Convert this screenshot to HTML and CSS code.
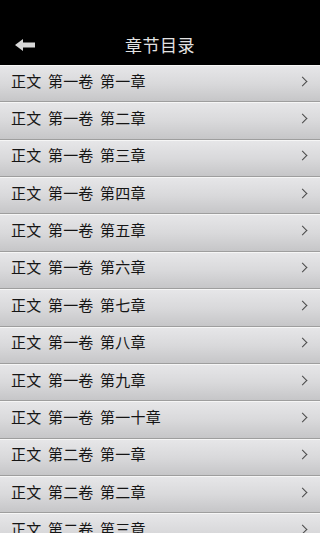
FILE: index.html
```html
<!DOCTYPE html>
<html>
<head>
<meta charset="utf-8">
<link rel="stylesheet" href="styles.css">
</head>
<body>
<div class="app">
  <div class="statusbar"></div>
  <div class="header">
    <div class="back">
      <svg width="22" height="14" viewBox="0 0 22 14"><path d="M1 7 L9 1 L9 4.5 L21 4.5 L21 9.5 L9 9.5 L9 13 Z" fill="#d8d8d8"/></svg>
    </div>
    <div class="title">章节目录</div>
  </div>
  <ul class="list">
    <li class="row"><span>正文 第一卷 第一章</span><i class="chev"></i></li>
    <li class="row"><span>正文 第一卷 第二章</span><i class="chev"></i></li>
    <li class="row"><span>正文 第一卷 第三章</span><i class="chev"></i></li>
    <li class="row"><span>正文 第一卷 第四章</span><i class="chev"></i></li>
    <li class="row"><span>正文 第一卷 第五章</span><i class="chev"></i></li>
    <li class="row"><span>正文 第一卷 第六章</span><i class="chev"></i></li>
    <li class="row"><span>正文 第一卷 第七章</span><i class="chev"></i></li>
    <li class="row"><span>正文 第一卷 第八章</span><i class="chev"></i></li>
    <li class="row"><span>正文 第一卷 第九章</span><i class="chev"></i></li>
    <li class="row"><span>正文 第一卷 第一十章</span><i class="chev"></i></li>
    <li class="row"><span>正文 第二卷 第一章</span><i class="chev"></i></li>
    <li class="row"><span>正文 第二卷 第二章</span><i class="chev"></i></li>
    <li class="row"><span>正文 第二卷 第三章</span><i class="chev"></i></li>
  </ul>
</div>
</body>
</html>
```
FILE: styles.css
```css
html, body {
  margin: 0;
  padding: 0;
  background: #000;
  overflow: hidden;
}
.app {
  width: 320px;
  height: 533px;
  overflow: hidden;
  font-family: "Noto Sans CJK SC", "Noto Sans", sans-serif;
}
.statusbar {
  height: 25px;
  background: #000;
}
.header {
  height: 40px;
  background: #000;
  display: flex;
  align-items: center;
  justify-content: center;
  position: relative;
}
.back {
  position: absolute;
  left: 14px;
  top: 13px;
  display: flex;
}
.title {
  color: #e2e2e2;
  font-size: 17px;
  letter-spacing: 0.5px;
  margin-bottom: 1px;
}
.list {
  list-style: none;
  margin: 0;
  padding: 0;
}
.row {
  box-sizing: border-box;
  height: 37.36px;
  display: flex;
  align-items: center;
  justify-content: space-between;
  padding: 0 12px 0 11px;
  background: linear-gradient(#e6e6e8 0%, #d9d9db 50%, #c6c6c8 100%);
  border-top: 1px solid #f6f6f6;
  border-bottom: 1px solid #9e9e9e;
  color: #151515;
  font-size: 15px;
}
.row span {
  word-spacing: 3px;
  letter-spacing: 0.2px;
  margin-bottom: 7px;
}
.chev {
  width: 6px;
  height: 6px;
  border-right: 1.5px solid #4a4a4a;
  border-top: 1.5px solid #4a4a4a;
  transform: rotate(45deg);
  margin-right: 2px;
  margin-bottom: 5px;
}
```
